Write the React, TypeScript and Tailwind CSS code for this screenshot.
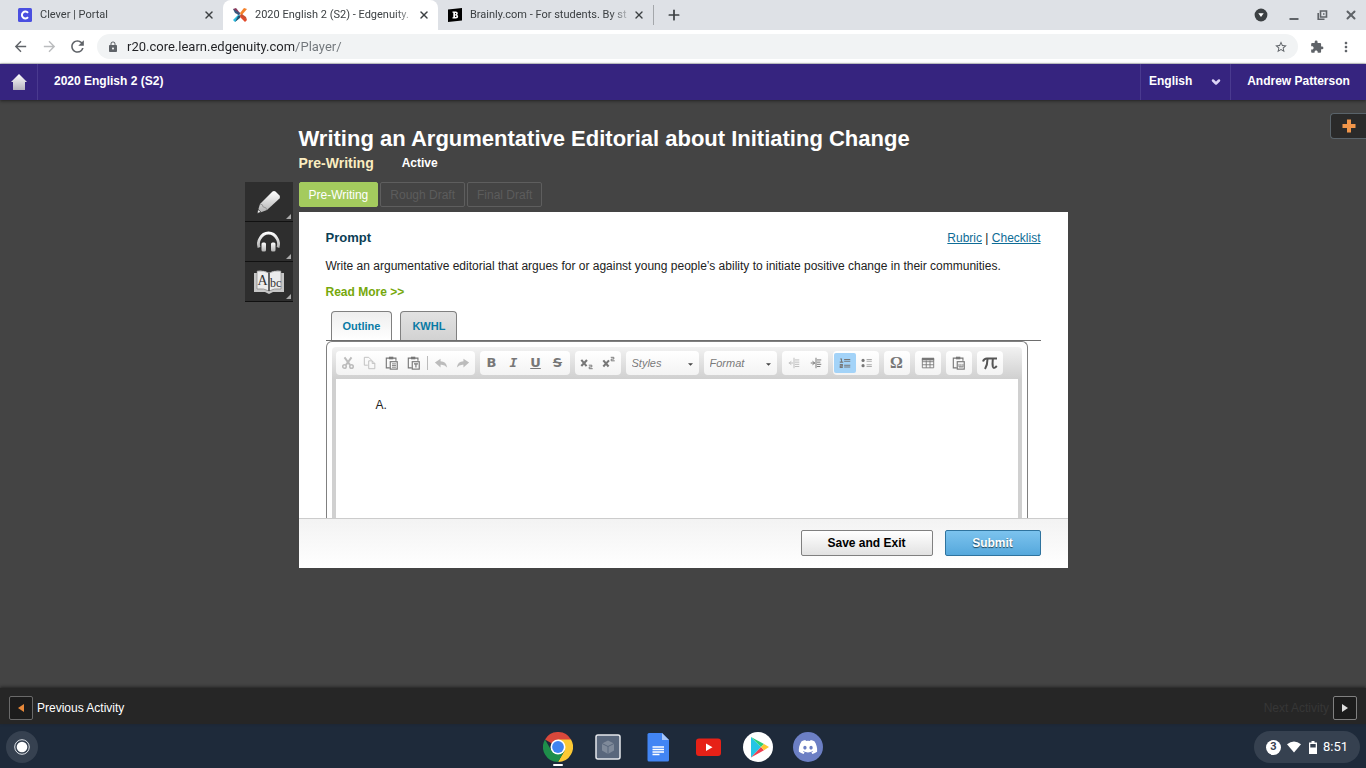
import { useState, type ReactNode } from "react";
import { ChevronDown, Plus, X } from "lucide-react";
import {
  MdArrowBack,
  MdArrowForward,
  MdExtension,
  MdLock,
  MdMoreVert,
  MdRefresh,
  MdStarBorder,
} from "react-icons/md";
import { FaDiscord } from "react-icons/fa";

function CleverIcon() {
  return (
    <svg viewBox="0 0 14 14" className="h-3.5 w-3.5 shrink-0">
      <rect width="14" height="14" rx="1.5" fill="#4a4fe0" />
      <path d="M10 4.9A3.4 3.4 0 1 0 10 9.1" fill="none" stroke="#fff" strokeWidth="2" />
    </svg>
  );
}

function EdgenuityIcon() {
  return (
    <svg viewBox="0 0 14 14" className="h-3.5 w-3.5 shrink-0">
      <path d="M0 1l3-1 4 5-1 3z" fill="#8c3a5c" />
      <path d="M0 12l2 2 5-5-1-3z" fill="#29bde0" />
      <path d="M2 14l5-4 1-3-3 1z" fill="#27526f" />
      <path d="M14 1l-3-1-4 5 1 3z" fill="#f4822a" />
      <path d="M14 12l-2 2-5-5 1-3z" fill="#e24a2b" />
      <path d="M0 1l2 4 4 2 1-2z" fill="#37587e" />
      <path d="M14 12l-1-3-4-3-1 2z" fill="#c9502f" />
    </svg>
  );
}

function BrainlyIcon() {
  return (
    <svg viewBox="0 0 14 14" className="h-3.5 w-3.5 shrink-0">
      <path d="M0 1.5L14 0v12.500L0 14z" fill="#000" />
      <path
        d="M4.500 3.500h3.300q2 0 2 1.700 0 1-.8 1.500 1.200.4 1.200 1.800 0 2-2.400 2H4.500V9.300h.8V4.800h-.8zM7 5v1.300h.6q.6 0 .6-.6T7.600 5zM7 7.500V9h.7q.8 0 .8-.7t-.8-.8z"
        fill="#fff"
        fillRule="evenodd"
      />
    </svg>
  );
}

const browserTabs = [
  { title: "Clever | Portal", icon: <CleverIcon />, active: false },
  { title: "2020 English 2 (S2) - Edgenuity.", icon: <EdgenuityIcon />, active: true },
  { title: "Brainly.com - For students. By st", icon: <BrainlyIcon />, active: false },
];

function TabStrip() {
  return (
    <div className="flex h-[30px] items-center bg-[#dee1e6] px-2 text-[#3c4043]">
      {browserTabs.map((tab) => (
        <div
          key={tab.title}
          className={`flex h-full w-[215px] items-center rounded-t-lg pl-2.5 pr-2 text-[11px] ${
            tab.active ? "bg-white" : ""
          }`}
        >
          {tab.icon}
          <span className="ml-2 flex-1 whitespace-nowrap [mask-image:linear-gradient(90deg,#000_86%,transparent)]">
            {tab.title}
          </span>
          <button aria-label="Close tab">
            <X className="h-3 w-3" strokeWidth={2.8} />
          </button>
        </div>
      ))}
      <span className="h-5 w-px bg-[#a4a7ab]" />
      <button aria-label="New tab" className="ml-3">
        <Plus className="h-4 w-4" strokeWidth={2.6} />
      </button>
      <div className="ml-auto flex items-center gap-4">
        <button aria-label="Search tabs">
          <svg viewBox="0 0 14 14" className="h-3.5 w-3.5">
            <circle cx="7" cy="7" r="6.400" fill="#3c4043" />
            <path d="M4.300 5.300h5.400L7 9z" fill="#fff" />
          </svg>
        </button>
        <button aria-label="Minimize" className="ml-1">
          <svg viewBox="0 0 12 12" className="h-3 w-3">
            <path d="M1.500 10h9" stroke="#5f6368" strokeWidth="2" />
          </svg>
        </button>
        <button aria-label="Restore">
          <svg viewBox="0 0 12 12" className="h-3 w-3" fill="none" stroke="#5f6368" strokeWidth="1.600">
            <path d="M4.500 2h6v6h-6zM2.200 4v6.300H8.500M7 5h1.500" />
          </svg>
        </button>
        <button aria-label="Close window">
          <X className="h-3.5 w-3.5 text-[#5f6368]" strokeWidth={3.4} />
        </button>
      </div>
    </div>
  );
}

function AddressBar() {
  return (
    <div className="flex h-[34px] items-center border-b border-[#d8dadd] bg-white px-3 text-[#5f6368]">
      <button aria-label="Back">
        <MdArrowBack className="h-[17px] w-[17px]" />
      </button>
      <button aria-label="Forward" className="ml-3 text-[#babcbe]">
        <MdArrowForward className="h-[17px] w-[17px]" />
      </button>
      <button aria-label="Reload" className="ml-2.5">
        <MdRefresh className="h-[19px] w-[19px]" />
      </button>
      <div className="ml-2.5 flex h-[25px] flex-1 items-center rounded-full bg-[#f1f3f4] px-2.5">
        <MdLock className="h-3 w-3" />
        <input
          aria-label="Address"
          defaultValue="r20.core.learn.edgenuity.com/Player/"
          className="ml-2 flex-1 bg-[linear-gradient(90deg,#202124_167px,#70757a_167px)] bg-clip-text text-[13px] text-transparent outline-none"
        />
        <button aria-label="Bookmark this page">
          <MdStarBorder className="h-3.5 w-3.5" />
        </button>
      </div>
      <button aria-label="Extensions" className="ml-3">
        <MdExtension className="h-3.5 w-3.5" />
      </button>
      <button aria-label="Menu" className="ml-3.5">
        <MdMoreVert className="h-4 w-4" />
      </button>
    </div>
  );
}

function CourseHeader() {
  return (
    <header className="z-10 flex h-9 items-stretch bg-[#36247f] text-xs font-bold text-white shadow-[0_1px_3px_#222]">
      <a
        href="#home"
        aria-label="Home"
        className="flex w-[38px] items-center justify-center border-r border-[#4a3a8f]"
      >
        <svg viewBox="0 0 18 18" className="h-[18px] w-[18px]">
          <defs>
            <linearGradient id="home" x2="0" y2="1">
              <stop stopColor="#fff" />
              <stop offset="1" stopColor="#b5b2bd" />
            </linearGradient>
          </defs>
          <path d="M9 1l8 8h-2v7.500q0 .5-.5.5h-11q-.5 0-.5-.5V9H1z" fill="url(#home)" />
        </svg>
      </a>
      <span className="flex items-center pb-0.5 pl-4">2020 English 2 (S2)</span>
      <div className="relative ml-auto w-[91px] border-x border-[#4a3a8f]">
        <select
          aria-label="Language"
          className="h-full w-full appearance-none bg-transparent pb-0.5 pl-2 outline-none"
        >
          <option>English</option>
        </select>
        <ChevronDown
          className="pointer-events-none absolute right-2 top-3 h-3 w-3 text-[#ddd5f5]"
          strokeWidth={5}
        />
      </div>
      <button className="w-[135px] pb-0.5">Andrew Patterson</button>
    </header>
  );
}

function ToolPalette() {
  const toolClass =
    "relative flex h-10 items-center justify-center border-b border-[#111] bg-[#2e2e2e]";
  const corner = (
    <svg viewBox="0 0 5 5" className="absolute bottom-0.5 right-0.5 h-[5px] w-[5px]">
      <path d="M5 0v5H0z" fill="#aaa" />
    </svg>
  );

  return (
    <div className="col-start-1 row-start-2 flex flex-col">
      <button aria-label="Highlighter" className={toolClass}>
        <svg viewBox="0 0 28 28" className="h-7 w-7">
          <defs>
            <linearGradient id="metal" x2="0" y2="1">
              <stop stopColor="#fff" />
              <stop offset="1" stopColor="#b0b0b0" />
            </linearGradient>
          </defs>
          <path d="M5 16L17.500 3.500q1.500-1 3 0l4 4q1 1.500 0 3L12 22l-8 3-1.500-1z" fill="url(#metal)" />
          <path d="M5 16q3 0 3.200 3 3.300 0 3.800 3" fill="none" stroke="#8a8a8a" strokeWidth=".8" />
          <path d="M3.200 21.500L2 25.500l4-1.300z" fill="#fff" stroke="#2e2e2e" strokeWidth=".8" />
        </svg>
        {corner}
      </button>
      <button aria-label="Read aloud" className={toolClass}>
        <svg viewBox="0 0 28 28" className="h-7 w-7">
          <defs>
            <linearGradient id="phones" x2="0" y2="1">
              <stop stopColor="#fff" />
              <stop offset="1" stopColor="#b0b0b0" />
            </linearGradient>
          </defs>
          <path d="M4 19.500q-1.500-5 1-9Q8 5 13.500 5T22 10.500q2.500 4 1 9" fill="none" stroke="url(#phones)" strokeWidth="2.800" />
          <rect x="6.500" y="14.500" width="4.500" height="9" rx="1.500" fill="url(#phones)" />
          <rect x="16" y="14.500" width="4.500" height="9" rx="1.500" fill="url(#phones)" />
        </svg>
        {corner}
      </button>
      <button aria-label="Dictionary" className={toolClass}>
        <svg viewBox="0 0 32 26" className="h-[26px] w-8">
          <path d="M1 4h3V2q7-1 12 2 5-3 12-2v2h3v19H20l-4 2-4-2H1z" fill="#c6c6c6" />
          <path
            d="M4 2q7-1 12 2v18q-5-3-12-2zM28 2q-7-1-12 2v18q5-3 12-2z"
            fill="#ececec"
            stroke="#777"
            strokeWidth=".6"
          />
          <path d="M16 4v18" stroke="#333" strokeWidth="1.200" />
          <text x="4.500" y="16" fontSize="14" fontFamily="Liberation Serif" fill="#333">A</text>
          <text x="17" y="18" fontSize="12" fontFamily="Liberation Serif" fill="#333">bc</text>
        </svg>
        {corner}
      </button>
    </div>
  );
}

function Group({ children, single }: { children: ReactNode; single?: boolean }) {
  return (
    <div
      className={`flex h-6 items-center rounded bg-linear-to-b from-white to-[#f3f3f3] ${
        single ? "px-0.5" : "px-px"
      }`}
    >
      {children}
    </div>
  );
}

interface ToolProps {
  label: string;
  children: ReactNode;
  dim?: boolean;
  pressed?: boolean;
}

function Tool({ label, children, dim, pressed }: ToolProps) {
  return (
    <button
      aria-label={label}
      className={`flex h-5 w-[22px] items-center justify-center rounded-xs ${
        dim ? "text-[#bcbcbc]" : "text-[#777]"
      } ${pressed ? "bg-[#a3d3f8]" : ""}`}
    >
      {children}
    </button>
  );
}

function Glyph({ children }: { children: ReactNode }) {
  return (
    <svg viewBox="0 0 16 16" className="h-3.5 w-3.5" fill="none" stroke="currentColor" strokeWidth="1.300">
      {children}
    </svg>
  );
}

function Clipboard({ children }: { children: ReactNode }) {
  return (
    <Glyph>
      <path d="M5.500 13.500h-4v-11h11v3" />
      <path d="M4.500 .8h5v3h-5z" fill="currentColor" stroke="none" />
      <rect x="6" y="6.500" width="8" height="8.500" />
      {children}
    </Glyph>
  );
}

function StyleSelect({ name }: { name: string }) {
  return (
    <div className="relative">
      <select
        aria-label={name}
        className="h-6 w-[73px] appearance-none rounded bg-linear-to-b from-white to-[#f3f3f3] pl-1.5 text-[11px] text-[#7a7a7a] italic outline-none"
      >
        <option>{name}</option>
      </select>
      <svg viewBox="0 0 6 3" className="pointer-events-none absolute right-1.5 top-3 h-[3px] w-[5px]">
        <path d="M0 0h6L3 3z" fill="#444" />
      </svg>
    </div>
  );
}

function EditorToolbar() {
  return (
    <div className="flex h-8 items-center gap-[5px] rounded-t bg-linear-to-b from-[#f2f2f2] to-[#d0d0d0] pl-1">
      <Group>
        <Tool label="Cut" dim>
          <Glyph>
            <path d="M4 1.500l6.500 9M12 1.500L5.500 10.500" strokeWidth="2.200" />
            <circle cx="4" cy="12" r="2" strokeWidth="1.800" />
            <circle cx="12" cy="12" r="2" strokeWidth="1.800" />
          </Glyph>
        </Tool>
        <Tool label="Copy" dim>
          <Glyph>
            <path d="M5.500 10.500h-4v-9h5l3 3" strokeWidth="1" />
            <path d="M6.500 5.500h4l3 3v6h-7zM10.500 5.500v3h3" strokeWidth="1" />
          </Glyph>
        </Tool>
        <Tool label="Paste">
          <Clipboard>
            <path d="M8 9h4.500M8 10.900h4.500M8 12.800h4.500" strokeWidth="1" />
          </Clipboard>
        </Tool>
        <Tool label="Paste as text">
          <Clipboard>
            <path d="M8 9h4.500M10.200 9v4" strokeWidth="1.300" />
          </Clipboard>
        </Tool>
        <span className="mx-0.5 h-3.5 w-px bg-[#bbb]" />
        <Tool label="Undo" dim>
          <Glyph>
            <path d="M1 7.500L7.500 3v3q6.500 0 7.500 7-3-3.500-7.500-3v3z" fill="currentColor" stroke="none" />
          </Glyph>
        </Tool>
        <Tool label="Redo" dim>
          <Glyph>
            <path d="M15 7.500L8.500 3v3Q2 6 1 13q3-3.500 7.500-3v3z" fill="currentColor" stroke="none" />
          </Glyph>
        </Tool>
      </Group>
      <Group>
        <Tool label="Bold">
          <span className="font-['DejaVu_Sans',sans-serif] text-[13px] font-bold">B</span>
        </Tool>
        <Tool label="Italic">
          <span className="font-['DejaVu_Sans_Mono',monospace] text-[13px] font-bold italic">I</span>
        </Tool>
        <Tool label="Underline">
          <span className="font-['DejaVu_Sans',sans-serif] text-[13px] font-bold underline">U</span>
        </Tool>
        <Tool label="Strikethrough">
          <span className="font-['DejaVu_Sans',sans-serif] text-[13px] font-bold line-through">S</span>
        </Tool>
      </Group>
      <Group>
        <Tool label="Subscript">
          <Glyph>
            <path d="M1.500 4.500l6 7M8 4.500l-6.500 7" strokeWidth="2.400" />
            <path d="M10 10.500h3.500v2h-3v2h4" strokeWidth="1.100" />
          </Glyph>
        </Tool>
        <Tool label="Superscript">
          <Glyph>
            <path d="M1.500 5l6 7M8 5l-6.500 7" strokeWidth="2.400" />
            <path d="M10 1.500h3.500v2h-3v2h4" strokeWidth="1.100" />
          </Glyph>
        </Tool>
      </Group>
      <StyleSelect name="Styles" />
      <StyleSelect name="Format" />
      <Group>
        <Tool label="Decrease indent" dim>
          <Glyph>
            <path d="M8 2v12M9 4.500h5M9 7h5M9 9.500h5M9 12h5M2 8h5M5 6L2.500 8 5 10" strokeWidth="1.100" />
          </Glyph>
        </Tool>
        <Tool label="Increase indent">
          <Glyph>
            <path d="M8 2v12M9 4.500h5M9 7h4M9 9.500h5M9 12h4M2 8h5M4 6l2.500 2L4 10" strokeWidth="1.100" />
          </Glyph>
        </Tool>
      </Group>
      <Group>
        <Tool label="Numbered list" pressed>
          <Glyph>
            <path d="M7 4h7M7 6h7M7 10.500h7M7 12.500h7" strokeWidth="1.200" />
            <path d="M2.500 3.500h1.500v3.500M2 7h4M2 9.800h3v1.500H2.500V13H5.500" strokeWidth="1.200" />
          </Glyph>
        </Tool>
        <Tool label="Bulleted list">
          <Glyph>
            <path d="M7.500 4h6M7.500 6h6M7.500 10h6M7.500 12h6" stroke="#aaa" />
            <circle cx="3.500" cy="5" r="1.800" fill="currentColor" stroke="none" />
            <circle cx="3.500" cy="11" r="1.800" fill="currentColor" stroke="none" />
          </Glyph>
        </Tool>
      </Group>
      <Group single>
        <Tool label="Special character">
          <span className="font-['Liberation_Serif',serif] text-base leading-5 font-bold">Ω</span>
        </Tool>
      </Group>
      <Group single>
        <Tool label="Table">
          <Glyph>
            <path d="M1.500 3v10.500h13V3M1.500 6.500h13M1.500 10h13M6 5v8.500M10.300 5v8.500" strokeWidth="1" />
            <path d="M1 2h14v3H1z" fill="currentColor" stroke="none" />
          </Glyph>
        </Tool>
      </Group>
      <Group single>
        <Tool label="Paste from Word">
          <Clipboard>
            <path d="M8 9v3.500h4.500V9M10.200 9v3.500" strokeWidth="1" />
          </Clipboard>
        </Tool>
      </Group>
      <Group single>
        <Tool label="Math">
          <svg viewBox="0 0 16 14" className="h-3.5 w-4" fill="none" stroke="#555">
            <path d="M1 5.500Q2 2.500 5 2.500h10" strokeWidth="2" />
            <path d="M5.500 3q0 6-2.500 10" strokeWidth="2" />
            <path d="M10.800 3q-.5 5 0 7.500.8 3 4-.5" strokeWidth="2" />
          </svg>
        </Tool>
      </Group>
    </div>
  );
}

function WritingActivity() {
  const [tab, setTab] = useState("Outline");

  return (
    <section className="bg-white text-xs text-[#222]">
      <div className="h-[306px] overflow-hidden px-[27px] pt-4">
        <div className="flex items-center justify-between leading-5">
          <h2 className="text-[13px] font-bold text-[#0b3e55]">Prompt</h2>
          <div>
            <a href="#rubric" className="text-[#0e6c96] underline">Rubric</a>
            {" | "}
            <a href="#checklist" className="text-[#0e6c96] underline">Checklist</a>
          </div>
        </div>
        <p className="mt-2 leading-5">
          Write an argumentative editorial that argues for or against young people’s ability to
          initiate positive change in their communities.
        </p>
        <a href="#more" className="mt-1.5 block leading-5 font-bold text-[#76a80c]">
          Read More &gt;&gt;
        </a>
        <div className="mt-[9px] flex gap-2 border-b border-[#6e6e6e] pl-[5px]">
          {["Outline", "KWHL"].map((name) => (
            <button
              key={name}
              onClick={() => setTab(name)}
              className={`h-[29px] rounded-t border border-b-0 border-[#808080] px-[11px] text-[11px] font-bold text-[#0a7ba5] ${
                tab === name
                  ? "bg-linear-to-b from-[#eee] to-white"
                  : "bg-linear-to-b from-[#e2e2e2] to-[#d2d2d2]"
              }`}
            >
              {name}
            </button>
          ))}
        </div>
        <div className="mr-[13px] rounded-t-md border border-b-0 border-[#808080] px-[5px] pt-[5px]">
          <EditorToolbar />
          <div
            contentEditable
            suppressContentEditableWarning
            role="textbox"
            aria-label="Outline text"
            className="h-52 border-x-4 border-[#d0d0d0] pl-10 pt-4 leading-5 outline-none"
          >
            A.
          </div>
        </div>
      </div>
      <div className="flex h-[50px] items-center justify-end gap-3 border-t border-[#ccc] bg-linear-to-b from-[#f3f3f3] to-white px-[27px] pb-0.5 font-bold">
        <button className="h-[26px] w-[132px] rounded-xs border border-[#808080] bg-linear-to-b from-white to-[#e2e2e2] text-black">
          Save and Exit
        </button>
        <button className="h-[26px] w-24 rounded-xs border border-[#2f739e] bg-linear-to-b from-[#7cc3ee] to-[#55a8dc] text-white [text-shadow:0_1px_1px_#245]">
          Submit
        </button>
      </div>
    </section>
  );
}

const phaseClass = "h-[25px] rounded-xs border px-[9px] text-xs";

function Player() {
  return (
    <main className="relative flex-1 bg-[#444] pt-[25px]">
      <button
        aria-label="Open panel"
        className="absolute right-0 top-[13px] flex h-[26px] w-9 items-center justify-center rounded-l border border-r-0 border-[#59636a] bg-[#2a2a2a]"
      >
        <svg viewBox="0 0 14 14" className="h-3.5 w-3.5">
          <path d="M5 .5h4V5h4.500v4H9v4.500H5V9H.5V5H5z" fill="#f0954a" />
        </svg>
      </button>
      <div className="grid grid-cols-[48px_minmax(0,769px)_48px] justify-center gap-x-1.5 gap-y-[9px]">
        <div className="col-start-2">
          <h1 className="text-[22px] leading-7 font-bold text-white">
            Writing an Argumentative Editorial about Initiating Change
          </h1>
          <div className="flex items-center gap-7 leading-5 font-bold">
            <span className="text-sm text-[#fbedc0]">Pre-Writing</span>
            <span className="text-xs text-white">Active</span>
          </div>
        </div>
        <ToolPalette />
        <div className="col-start-2 row-start-2">
          <div className="mb-[5px] flex gap-0.5">
            <button className={`${phaseClass} border-[#a4cb5e] bg-[#a4cb5e] text-white`}>
              Pre-Writing
            </button>
            <button className={`${phaseClass} border-[#5e5e5e] text-[#5c5c5c]`}>Rough Draft</button>
            <button className={`${phaseClass} border-[#5e5e5e] text-[#5c5c5c]`}>Final Draft</button>
          </div>
          <WritingActivity />
        </div>
      </div>
    </main>
  );
}

function ActivityNav() {
  const boxClass = "flex h-6 w-6 items-center justify-center rounded-xs border bg-[#1c1c1c]";
  return (
    <nav className="z-10 flex h-9 items-center justify-between bg-[#262626] px-[9px] pt-1 text-xs shadow-[0_-1px_3px_#222]">
      <button className="flex items-center gap-1 text-white">
        <span className={`${boxClass} border-[#6a6a6a]`}>
          <svg viewBox="0 0 6 8" className="h-2 w-1.5">
            <path d="M6 0v8L0 4z" fill="#e8893a" />
          </svg>
        </span>
        Previous Activity
      </button>
      <button className="flex items-center gap-1 text-[#363636]">
        Next Activity
        <span className={`${boxClass} border-[#808080]`}>
          <svg viewBox="0 0 6 8" className="h-2 w-1.5">
            <path d="M0 0v8l6-4z" fill="#ddd" />
          </svg>
        </span>
      </button>
    </nav>
  );
}

function Shelf() {
  return (
    <footer className="z-10 grid h-11 grid-cols-[1fr_auto_1fr] items-center bg-[#1e2a3a] px-1.5 pt-0.5 text-white">
      <button
        aria-label="Launcher"
        className="flex h-8 w-8 items-center justify-center rounded-full bg-[#364150]"
      >
        <svg viewBox="0 0 16 16" className="h-4 w-4">
          <circle cx="8" cy="8" r="7.300" fill="none" stroke="#dfe3e8" strokeWidth="1" />
          <circle cx="8" cy="8" r="5.300" fill="#fff" />
        </svg>
      </button>
      <div className="flex items-center gap-5">
        <button aria-label="Chrome" className="relative">
          <svg viewBox="0 0 30 30" className="h-[30px] w-[30px]">
            <path d="M15 15L2 7.500A15 15 0 0 1 28 7.500z" fill="#d9483b" />
            <path d="M28 7.500A15 15 0 0 1 15 30l6.500-11.200L15 7.500z" fill="#fcc934" />
            <path d="M2 7.500A15 15 0 0 0 15 30l6.500-11.200L15 15 8.500 18.800z" fill="#1e8e4a" />
            <circle cx="15" cy="15" r="7.500" fill="#fff" />
            <circle cx="15" cy="15" r="5.900" fill="#3f83f0" />
          </svg>
          <span className="absolute -bottom-1 left-2.5 h-0.5 w-2.5 rounded bg-white" />
        </button>
        <button aria-label="App">
          <svg viewBox="0 0 30 30" className="h-[30px] w-[30px]">
            <rect x="3" y="3" width="24" height="24" rx="2" fill="#59677c" stroke="#e5e8ec" strokeWidth="1.500" />
            <path d="M15 8.500l6 3v7l-6 3.500-6-3.500v-7z" fill="#7f8a9a" />
            <path d="M9 11.500l6 3 6-3M15 14.500V22" fill="none" stroke="#59677c" />
          </svg>
        </button>
        <button aria-label="Docs">
          <svg viewBox="0 0 30 30" className="h-[30px] w-[30px]">
            <path
              d="M6 1h13l7 7v20q0 1.500-1.500 1.500H6Q4.500 29.500 4.500 28V2.500Q4.500 1 6 1z"
              fill="#4285f4"
            />
            <path d="M19 1l7 7h-7z" fill="#a9c7fa" />
            <path d="M9.500 15h11.500M9.500 17.500h11.500M9.500 20h11.500M9.500 22.500h7" stroke="#fff" strokeWidth="1.300" />
          </svg>
        </button>
        <button aria-label="YouTube">
          <svg viewBox="0 0 30 30" className="h-[30px] w-[30px]">
            <rect x="3" y="6.500" width="25" height="17.500" rx="3" fill="#e62117" />
            <path d="M13 11.500v7.500l6.500-3.700z" fill="#fff" />
          </svg>
        </button>
        <button aria-label="Play Store">
          <svg viewBox="0 0 30 30" className="h-[30px] w-[30px]">
            <circle cx="15" cy="15" r="15" fill="#fff" />
            <path d="M8 5l10 10L8 25.500z" fill="#25c5e5" />
            <path d="M8 5l13 7-3 3z" fill="#2ccf7a" />
            <path d="M8 25.500L18 15l3 3.200z" fill="#ef4050" />
            <path d="M21 12l5 3-5 3.200-3-3.200z" fill="#fcc62f" />
          </svg>
        </button>
        <button
          aria-label="Discord"
          className="flex h-[30px] w-[30px] items-center justify-center rounded-full bg-[#6c7fc4]"
        >
          <FaDiscord className="h-5 w-5" />
        </button>
      </div>
      <button className="flex h-8 items-center gap-1.5 justify-self-end rounded-full bg-[#364150] px-3 text-[13px]">
        <span className="flex h-[15px] w-[15px] items-center justify-center rounded-full bg-white text-[11px] font-bold text-[#364150]">
          3
        </span>
        <svg viewBox="0 0 14 12" className="h-3 w-3.5">
          <path d="M0 3.200Q7-2 14 3.200L7 11.500z" fill="#fff" />
        </svg>
        <svg viewBox="0 0 8 13" className="ml-0.5 h-[13px] w-2">
          <path
            d="M2.500 0h3v1.500H8V13H0V1.500h2.500zM1.300 3v3.500h5.400V3z"
            fill="#fff"
            fillRule="evenodd"
          />
        </svg>
        <span>8:51</span>
      </button>
    </footer>
  );
}

export default function App() {
  return (
    <div className="flex min-h-screen flex-col font-['Liberation_Sans',Arial,sans-serif]">
      <div className="font-[Roboto,sans-serif]">
        <TabStrip />
        <AddressBar />
      </div>
      <CourseHeader />
      <Player />
      <ActivityNav />
      <div className="font-[Roboto,sans-serif]">
        <Shelf />
      </div>
    </div>
  );
}
